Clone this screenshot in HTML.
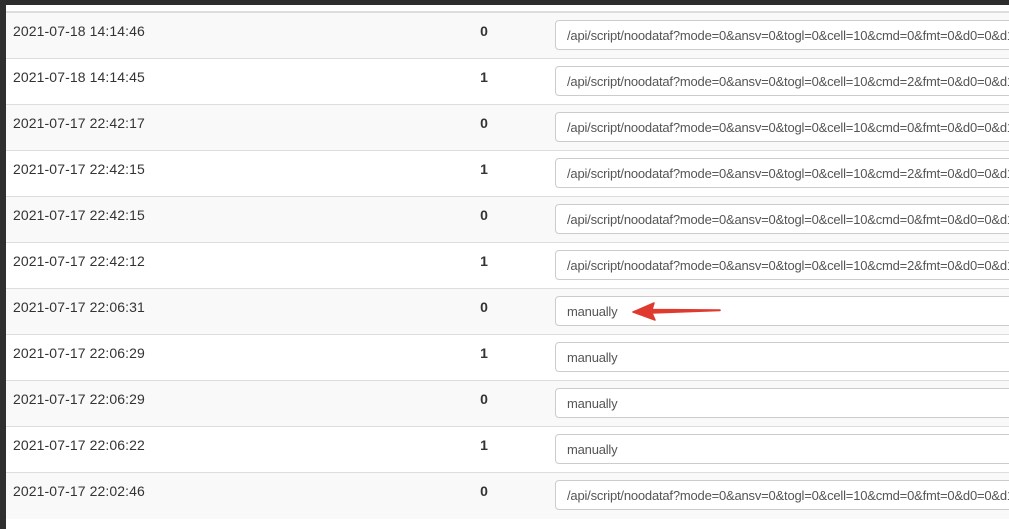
<!DOCTYPE html>
<html><head><style>
body{margin:0;width:1009px;height:529px;overflow:hidden;background:#fff;font-family:"Liberation Sans",sans-serif;position:relative}
.top{position:absolute;left:0;top:0;width:1009px;height:5px;background:#2d2d2d}
.left{position:absolute;left:0;top:0;width:6px;height:529px;background:#2f2f2f}
.tbl{position:absolute;left:6px;top:11px;width:1003px;border-top:2px solid #ddd}
.r{height:45px;border-bottom:1px solid #ddd;position:relative}
.r:nth-child(odd){background:#f9f9f9}
.r:last-child{border-bottom:none;height:46px}
.d{position:absolute;left:7px;top:10px;font-size:14px;color:#333;letter-spacing:0.1px}
.n{position:absolute;left:474px;top:10px;width:8px;text-align:center;font-size:14px;font-weight:bold;color:#333}
.i{position:absolute;left:549px;top:7px;width:470px;height:30px;border:1px solid #ccc;border-radius:4px;background:#fff;box-sizing:border-box;font-size:13px;color:#555;padding:7px 11px;white-space:nowrap;overflow:hidden;letter-spacing:-0.2px}
</style></head><body>
<div class="top"></div><div class="left"></div>
<div class="tbl">
<div class="r"><span class="d">2021-07-18 14:14:46</span><span class="n">0</span><div class="i">/api/script/noodataf?mode=0&amp;ansv=0&amp;togl=0&amp;cell=10&amp;cmd=0&amp;fmt=0&amp;d0=0&amp;d1</div></div>
<div class="r"><span class="d">2021-07-18 14:14:45</span><span class="n">1</span><div class="i">/api/script/noodataf?mode=0&amp;ansv=0&amp;togl=0&amp;cell=10&amp;cmd=2&amp;fmt=0&amp;d0=0&amp;d1</div></div>
<div class="r"><span class="d">2021-07-17 22:42:17</span><span class="n">0</span><div class="i">/api/script/noodataf?mode=0&amp;ansv=0&amp;togl=0&amp;cell=10&amp;cmd=0&amp;fmt=0&amp;d0=0&amp;d1</div></div>
<div class="r"><span class="d">2021-07-17 22:42:15</span><span class="n">1</span><div class="i">/api/script/noodataf?mode=0&amp;ansv=0&amp;togl=0&amp;cell=10&amp;cmd=2&amp;fmt=0&amp;d0=0&amp;d1</div></div>
<div class="r"><span class="d">2021-07-17 22:42:15</span><span class="n">0</span><div class="i">/api/script/noodataf?mode=0&amp;ansv=0&amp;togl=0&amp;cell=10&amp;cmd=0&amp;fmt=0&amp;d0=0&amp;d1</div></div>
<div class="r"><span class="d">2021-07-17 22:42:12</span><span class="n">1</span><div class="i">/api/script/noodataf?mode=0&amp;ansv=0&amp;togl=0&amp;cell=10&amp;cmd=2&amp;fmt=0&amp;d0=0&amp;d1</div></div>
<div class="r"><span class="d">2021-07-17 22:06:31</span><span class="n">0</span><div class="i">manually</div></div>
<div class="r"><span class="d">2021-07-17 22:06:29</span><span class="n">1</span><div class="i">manually</div></div>
<div class="r"><span class="d">2021-07-17 22:06:29</span><span class="n">0</span><div class="i">manually</div></div>
<div class="r"><span class="d">2021-07-17 22:06:22</span><span class="n">1</span><div class="i">manually</div></div>
<div class="r"><span class="d">2021-07-17 22:02:46</span><span class="n">0</span><div class="i">/api/script/noodataf?mode=0&amp;ansv=0&amp;togl=0&amp;cell=10&amp;cmd=0&amp;fmt=0&amp;d0=0&amp;d1</div></div>
</div>
<svg style="position:absolute;left:0;top:0" width="1009" height="529">
<path d="M720 310.5 L652 313 L655 320 L633 312 L654 303 L652 309.5 L720 310 Z" fill="#e03a2e" stroke="#e03a2e" stroke-width="1.5" stroke-linejoin="round"/>
</svg>
</body></html>
